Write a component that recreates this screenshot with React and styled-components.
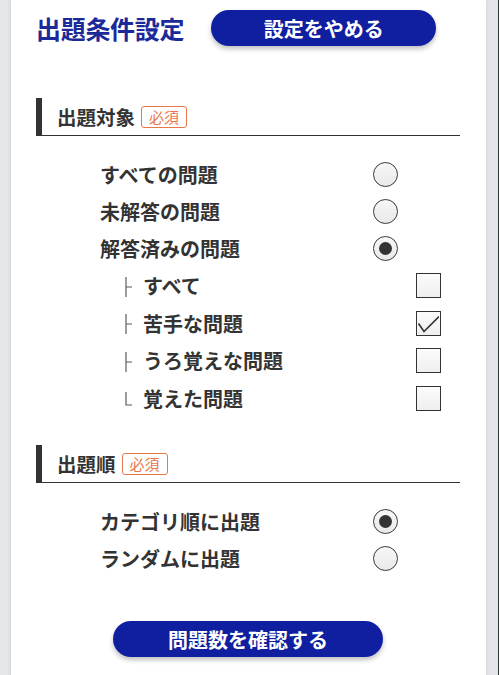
import React from 'react'
import styled, { createGlobalStyle } from 'styled-components'

const GlobalStyle = createGlobalStyle`
  html, body {
    margin: 0;
    padding: 0;
  }
  body {
    background: #e5e6ea;
    font-family: "Noto Sans CJK JP", "Noto Sans", sans-serif;
    color: #333;
  }
`

const Frame = styled.div`
  min-height: 100vh;
  box-sizing: border-box;
  padding: 0 12px 0 11px;
  border-right: 1px solid #2e3436;
`

const Panel = styled.div`
  background: #fff;
  min-height: 100vh;
  box-sizing: border-box;
  padding: 10px 26px 30px 25px;
  box-shadow: 0 0 4px rgba(0, 0, 0, 0.12);
`

const TitleRow = styled.div`
  display: flex;
  align-items: center;
  gap: 27px;
`

const Title = styled.h1`
  margin: 0;
  font-size: 25px;
  font-weight: 700;
  color: #1b2a98;
  line-height: 36px;
  letter-spacing: -0.3px;
`

const PillButton = styled.button`
  width: ${p => p.$width}px;
  height: 36px;
  border: none;
  border-radius: 18px;
  background: #0f1f9f;
  color: #fff;
  font-family: inherit;
  font-size: 20px;
  font-weight: 700;
  box-shadow: 0 3px 5px rgba(0, 0, 0, 0.25);
  display: flex;
  align-items: center;
  justify-content: center;
  padding: 0;
`

const Section = styled.section`
  margin-top: ${p => p.$top}px;
`

const SectionHead = styled.div`
  height: 37px;
  border-left: 6px solid #333;
  border-bottom: 1px solid #333;
  display: flex;
  align-items: center;
  padding-left: 15px;
  gap: 6px;
`

const HeadText = styled.h2`
  margin: 0;
  font-size: 19.5px;
  font-weight: 700;
  color: #333;
`

const Badge = styled.span`
  border: 1px solid #e8784c;
  border-radius: 3px;
  color: #e8784c;
  font-size: 15px;
  line-height: 20px;
  padding: 0 7px;
`

const List = styled.div`
  padding-top: 20px;
`

const Row = styled.label`
  display: flex;
  align-items: center;
  justify-content: space-between;
  height: ${p => (p.$sub ? 37.5 : 37)}px;
  margin-left: ${p => (p.$sub ? 89 : 64)}px;
  margin-right: ${p => (p.$sub ? 19 : 62)}px;
`

const Label = styled.span`
  display: flex;
  align-items: center;
  font-size: 20px;
  font-weight: 700;
  color: #333;
`

const Branch = styled.svg`
  display: block;
  flex: none;
  margin-top: 2px;
`

const Radio = styled.span`
  width: 25px;
  height: 25px;
  box-sizing: border-box;
  border-radius: 50%;
  border: 1.5px solid #3a3a3a;
  background: linear-gradient(#f7f7f7, #e9e9e9);
  display: flex;
  align-items: center;
  justify-content: center;
  &::after {
    content: '';
    display: ${p => (p.$on ? 'block' : 'none')};
    width: 13px;
    height: 13px;
    border-radius: 50%;
    background: #333;
  }
`

const Check = styled.span`
  width: 25px;
  height: 25px;
  box-sizing: border-box;
  border: 1.5px solid #333;
  background: linear-gradient(#fbfbfb, #efefef);
  display: block;
  svg {
    display: block;
  }
`

const Footer = styled.div`
  display: flex;
  justify-content: center;
  margin-top: 44px;
`

const targets = [
  { label: 'すべての問題' },
  { label: '未解答の問題' },
  { label: '解答済みの問題', on: true },
]

const subs = [
  { label: 'すべて' },
  { label: '苦手な問題', on: true },
  { label: 'うろ覚えな問題' },
  { label: '覚えた問題', last: true },
]

const orders = [
  { label: 'カテゴリ順に出題', on: true },
  { label: 'ランダムに出題' },
]

const TreeMark = ({ last }) => (
  <Branch width="18" height="22" viewBox="0 0 18 22">
    {last ? (
      <path d="M1 4 V17 H7" fill="none" stroke="#5a5a5a" strokeWidth="1.2" />
    ) : (
      <path d="M1 1 V21 M1 11 H7" fill="none" stroke="#5a5a5a" strokeWidth="1.2" />
    )}
  </Branch>
)

const App = () => {
  return (
    <Frame>
      <GlobalStyle />
      <Panel>
        <TitleRow>
          <Title>出題条件設定</Title>
          <PillButton $width={225}>設定をやめる</PillButton>
        </TitleRow>

        <Section $top={52}>
          <SectionHead>
            <HeadText>出題対象</HeadText>
            <Badge>必須</Badge>
          </SectionHead>
          <List>
            {targets.map(t => (
              <Row key={t.label}>
                <Label>{t.label}</Label>
                <Radio $on={t.on} />
              </Row>
            ))}
            {subs.map(s => (
              <Row key={s.label} $sub>
                <Label>
                  <TreeMark last={s.last} />
                  {s.label}
                </Label>
                <Check>
                  {s.on && (
                    <svg width="22" height="22" viewBox="0 0 22 22">
                      <path d="M1.5 11.5 L7 19.5 L22 4.5" fill="none" stroke="#333" strokeWidth="1.6" />
                    </svg>
                  )}
                </Check>
              </Row>
            ))}
          </List>
        </Section>

        <Section $top={28}>
          <SectionHead>
            <HeadText>出題順</HeadText>
            <Badge>必須</Badge>
          </SectionHead>
          <List>
            {orders.map(o => (
              <Row key={o.label}>
                <Label>{o.label}</Label>
                <Radio $on={o.on} />
              </Row>
            ))}
          </List>
        </Section>

        <Footer>
          <PillButton $width={270}>問題数を確認する</PillButton>
        </Footer>
      </Panel>
    </Frame>
  )
}

export default App
